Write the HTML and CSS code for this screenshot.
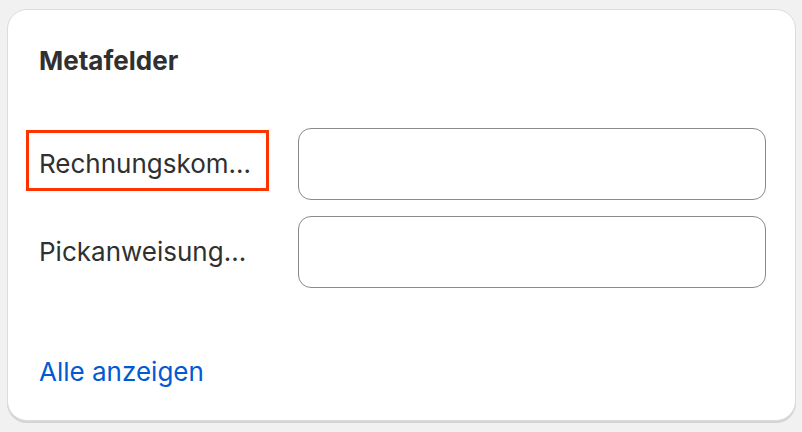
FILE: index.html
```html
<!DOCTYPE html>
<html lang="de">
<head>
<meta charset="utf-8">
<link rel="stylesheet" href="styles.css">
</head>
<body>
<div class="card">
  <h2 class="title">Metafelder</h2>
  <div class="rows">
    <div class="row">
      <div class="label-cell"><span class="label highlighted">Rechnungskom...</span></div>
      <div class="input"></div>
    </div>
    <div class="row">
      <div class="label-cell"><span class="label">Pickanweisung...</span></div>
      <div class="input"></div>
    </div>
  </div>
  <a class="link" href="#">Alle anzeigen</a>
</div>
</body>
</html>
```
FILE: styles.css
```css
html, body {
  margin: 0;
  padding: 0;
  background: #f1f1f1;
  width: 802px;
  height: 432px;
  overflow: hidden;
}
body {
  font-family: Inter, "Noto Sans", sans-serif;
  color: #303030;
  padding: 9px 6px 0 7px;
  box-sizing: border-box;
}
.card {
  background: #fff;
  border: 1px solid #dcdcdc;
  border-radius: 20px;
  box-shadow: 0 2px 0 #d4d4d4;
  height: 412px;
  box-sizing: border-box;
  padding: 0 29px 0 31px;
  display: flex;
  flex-direction: column;
}
.title {
  margin: 0;
  padding-top: 35px;
  font-size: 26px;
  line-height: 32px;
  font-weight: 650;
  color: #303030;
}
.rows {
  margin-top: 51px;
  display: flex;
  flex-direction: column;
  gap: 16px;
}
.row {
  display: grid;
  grid-template-columns: 259px 1fr;
  align-items: center;
}
.label-cell {
  display: flex;
  align-items: center;
}
.label {
  font-size: 26px;
  line-height: 32px;
  color: #303030;
  white-space: nowrap;
}
.highlighted {
  box-sizing: border-box;
  width: 243px;
  margin-left: -13px;
  margin-top: -8px;
  padding: 15px 0 8px 10px;
  border: 3px solid #ff3300;
}
.input {
  height: 72px;
  border: 1px solid #8a8a8a;
  border-radius: 13px;
  box-sizing: border-box;
}
.link {
  margin-top: 68px;
  font-size: 26px;
  line-height: 32px;
  color: #005bd3;
  text-decoration: none;
  align-self: flex-start;
}
```
